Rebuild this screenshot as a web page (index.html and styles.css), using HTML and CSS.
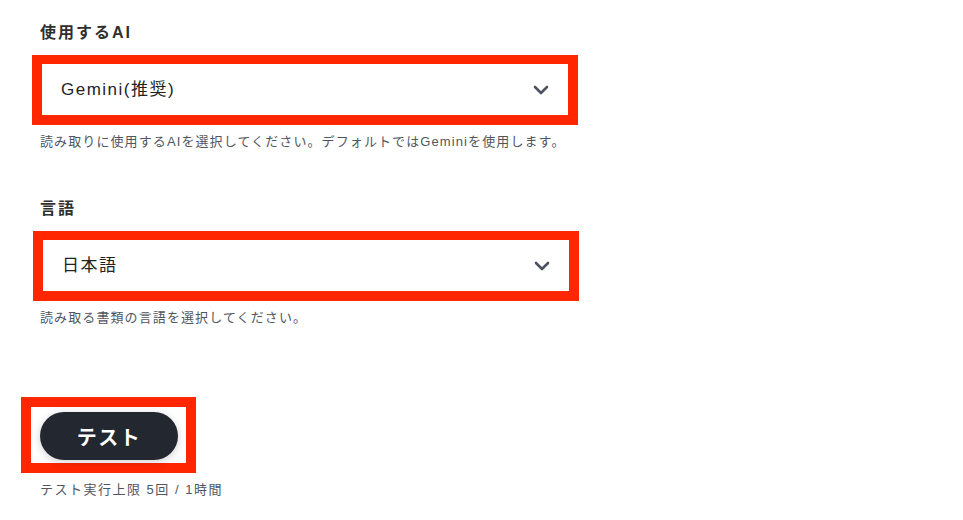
FILE: index.html
```html
<!DOCTYPE html>
<html lang="ja">
<head>
    <meta charset="UTF-8">
    <meta name="viewport" content="width=device-width, initial-scale=1.0">
    <title>読み取り設定</title>
    <link rel="stylesheet" href="styles.css">
</head>
<body>
    <div class="container">
        <!-- 使用するAI -->
        <div class="field">
            <label class="field-label" for="aiSelect">使用するAI</label>
            <div class="select-box">
                <select id="aiSelect" class="select">
                    <option>Gemini(推奨)</option>
                    <option>ChatGPT</option>
                </select>
                <svg class="chevron" width="16" height="10" viewBox="0 0 16 10">
                    <path d="M2 2 L8 8 L14 2" fill="none" stroke="#4b5360" stroke-width="2.6" stroke-linecap="round" stroke-linejoin="round"/>
                </svg>
            </div>
            <p class="help">読み取りに使用するAIを選択してください。デフォルトではGeminiを使用します。</p>
        </div>

        <!-- 言語 -->
        <div class="field field-lang">
            <label class="field-label" for="langSelect">言語</label>
            <div class="select-box">
                <select id="langSelect" class="select">
                    <option>日本語</option>
                    <option>English</option>
                </select>
                <svg class="chevron" width="16" height="10" viewBox="0 0 16 10">
                    <path d="M2 2 L8 8 L14 2" fill="none" stroke="#4b5360" stroke-width="2.6" stroke-linecap="round" stroke-linejoin="round"/>
                </svg>
            </div>
            <p class="help">読み取る書類の言語を選択してください。</p>
        </div>

        <!-- テスト -->
        <div class="test-area">
            <div class="button-box">
                <button class="btn-test">テスト</button>
            </div>
            <p class="limit">テスト実行上限 5回 / 1時間</p>
        </div>
    </div>
</body>
</html>
```

FILE: styles.css
```css
body {
    margin: 0;
    font-family: "Liberation Sans", "Noto Sans CJK JP", sans-serif;
    color: #2b2b2b;
    background: #fff;
}
.container {
    padding: 21px 0 0 40px;
}
.field-label {
    display: block;
    font-size: 16px;
    line-height: 24px;
    font-weight: 600;
    letter-spacing: 2px;
    color: #2f2f2f;
}
.select-box {
    position: relative;
    width: 526px;
    height: 51px;
    margin: 10px 0 0 -8px;
    border: 10px solid #ff2600;
    border-top-width: 9px;
    background: #fff;
}
.select {
    appearance: none;
    -webkit-appearance: none;
    width: 100%;
    height: 100%;
    border: none;
    background: transparent;
    padding: 0 0 0 19px;
    font-family: "Liberation Sans", "Noto Sans CJK JP", sans-serif;
    font-size: 17px;
    letter-spacing: 1.5px;
    color: #222;
    outline: none;
}
.chevron {
    position: absolute;
    right: 19px;
    top: 21px;
    pointer-events: none;
}
.help {
    margin: 8px 0 0;
    font-size: 13px;
    line-height: 18px;
    letter-spacing: 1.1px;
    color: #50565e;
}
.field-lang {
    margin-top: 46px;
}
.field-lang .select-box {
    margin-left: -7px;
}
.test-area {
    margin-top: 70px;
}
.button-box {
    display: inline-block;
    margin-left: -19px;
    border: 10px solid #ff2600;
    padding: 5px 8px 3px 9px;
    background: #fff;
}
.btn-test {
    display: block;
    width: 138px;
    height: 48px;
    border: none;
    border-radius: 24px;
    background: #23272f;
    color: #fff;
    font-family: "Liberation Sans", "Noto Sans CJK JP", sans-serif;
    font-size: 20px;
    font-weight: 700;
    letter-spacing: 1.5px;
    box-shadow: 0 2px 8px rgba(0, 0, 0, 0.18);
    cursor: pointer;
}
.limit {
    margin: 8px 0 0;
    font-size: 13px;
    line-height: 18px;
    letter-spacing: 1.5px;
    color: #50565e;
}
```
